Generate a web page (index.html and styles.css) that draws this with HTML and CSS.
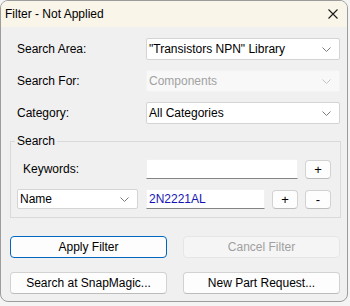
FILE: index.html
```html
<!DOCTYPE html>
<html lang="en">
<head>
  <meta charset="UTF-8" />
  <title>Filter - Not Applied</title>
  <link rel="stylesheet" href="styles.css">
</head>
<body>
  <div class="window">
    <div class="titlebar">
      <span class="title">Filter - Not Applied</span>
      <svg class="close" width="10" height="10" viewBox="0 0 10 10">
        <path d="M0.5 0.5 L9.5 9.5 M9.5 0.5 L0.5 9.5" stroke="#1a1a1a" stroke-width="1.1" fill="none"/>
      </svg>
    </div>

    <div class="content">
      <!-- main options -->
      <div class="form">
        <label class="lbl">Search Area:</label>
        <div class="combo">
          <span>"Transistors NPN" Library</span>
          <svg class="chev" width="9" height="5" viewBox="0 0 9 5"><path d="M0.5 0.5 L4.5 4.5 L8.5 0.5" stroke="#7a7a7a" fill="none"/></svg>
        </div>

        <label class="lbl">Search For:</label>
        <div class="combo disabled">
          <span>Components</span>
          <svg class="chev" width="9" height="5" viewBox="0 0 9 5"><path d="M0.5 0.5 L4.5 4.5 L8.5 0.5" stroke="#c4c4c4" fill="none"/></svg>
        </div>

        <label class="lbl">Category:</label>
        <div class="combo">
          <span>All Categories</span>
          <svg class="chev" width="9" height="5" viewBox="0 0 9 5"><path d="M0.5 0.5 L4.5 4.5 L8.5 0.5" stroke="#7a7a7a" fill="none"/></svg>
        </div>
      </div>

      <!-- search group -->
      <fieldset class="group">
        <legend>Search</legend>
        <div class="row">
          <label class="kw-lbl">Keywords:</label>
          <div class="field kw-field"></div>
          <div class="btn small">+</div>
        </div>
        <div class="row second">
          <div class="combo name-combo">
            <span>Name</span>
            <svg class="chev" width="9" height="5" viewBox="0 0 9 5"><path d="M0.5 0.5 L4.5 4.5 L8.5 0.5" stroke="#7a7a7a" fill="none"/></svg>
          </div>
          <div class="field val-field">2N2221AL</div>
          <div class="btn small">+</div>
          <div class="btn small">-</div>
        </div>
      </fieldset>

      <!-- buttons -->
      <div class="actions">
        <div class="btn big primary">Apply Filter</div>
        <div class="btn big disabled">Cancel Filter</div>
        <div class="btn big">Search at SnapMagic...</div>
        <div class="btn big">New Part Request...</div>
      </div>
    </div>
  </div>
</body>
</html>
```

FILE: styles.css
```css
html, body {
  margin: 0;
  background: #f4f4f4;
}
body {
  font-family: 'Liberation Sans', Arial, sans-serif;
  font-size: 12px;
  color: #000;
}
.window {
  width: 346px;
  border: 1px solid #9c9c9c;
  border-radius: 8px;
  background: #f0f0f0;
  overflow: hidden;
}
.titlebar {
  height: 26px;
  background: #faf5e9;
  display: flex;
  align-items: center;
  justify-content: space-between;
  padding: 0 9px 0 4px;
}
.title {
  line-height: 14px;
}
.close {
  display: block;
  margin-top: -1px;
}
.content {
  padding: 11px 6px 7px 9px;
}
.form {
  margin-left: 7px;
  display: grid;
  grid-template-columns: 129px 194px;
  grid-auto-rows: 22px;
  row-gap: 10px;
  align-items: center;
}
.combo {
  height: 100%;
  box-sizing: border-box;
  background: #fff;
  border: 1px solid #d4d4d4;
  border-radius: 2px;
  display: flex;
  align-items: center;
  justify-content: space-between;
  padding: 0 8px 0 2px;
}
.combo.disabled {
  background: #f8f8f8;
  border-color: #f3f3f3;
  color: #a2a2a2;
}
.chev {
  display: block;
}
.group {
  margin: 10px 0 0;
  padding: 0 9px 8px 4px;
  border: 1px solid #dadada;
  min-width: 0;
}
.group legend {
  padding: 0 2px;
  line-height: 14px;
}
.row {
  display: flex;
  align-items: center;
  height: 20px;
  margin-top: 11px;
}
.row.second {
  margin-top: 10px;
}
.kw-lbl {
  width: 123px;
  padding-left: 8px;
}
.field {
  height: 20px;
  box-sizing: border-box;
  background: #fff;
  border: 1px solid #f2f2f2;
  border-bottom: 1px solid #848484;
  padding: 0 2px;
  line-height: 18px;
}
.kw-field {
  width: 152px;
  margin-right: 7px;
}
.name-combo {
  width: 121px;
  margin-left: 2px;
  margin-right: 8px;
}
.val-field {
  width: 119px;
  margin-right: 7px;
  color: #1414b4;
}
.btn {
  box-sizing: border-box;
  background: #fdfdfd;
  border: 1px solid #d2d2d2;
  border-bottom-color: #bcbcbc;
  border-radius: 4px;
  display: flex;
  align-items: center;
  justify-content: center;
}
.btn.small {
  width: 26px;
  height: 19px;
  font-size: 13px;
}
.row.second .btn.small + .btn.small {
  margin-left: 7px;
}
.actions {
  margin-top: 18px;
  display: grid;
  grid-template-columns: 157px 157px;
  column-gap: 16px;
  row-gap: 14px;
}
.btn.big {
  height: 22px;
}
.btn.primary {
  border: 1px solid #0067c0;
}
.btn.disabled {
  background: #f5f5f5;
  border-color: #e6e6e6;
  color: #a0a0a0;
}
```
